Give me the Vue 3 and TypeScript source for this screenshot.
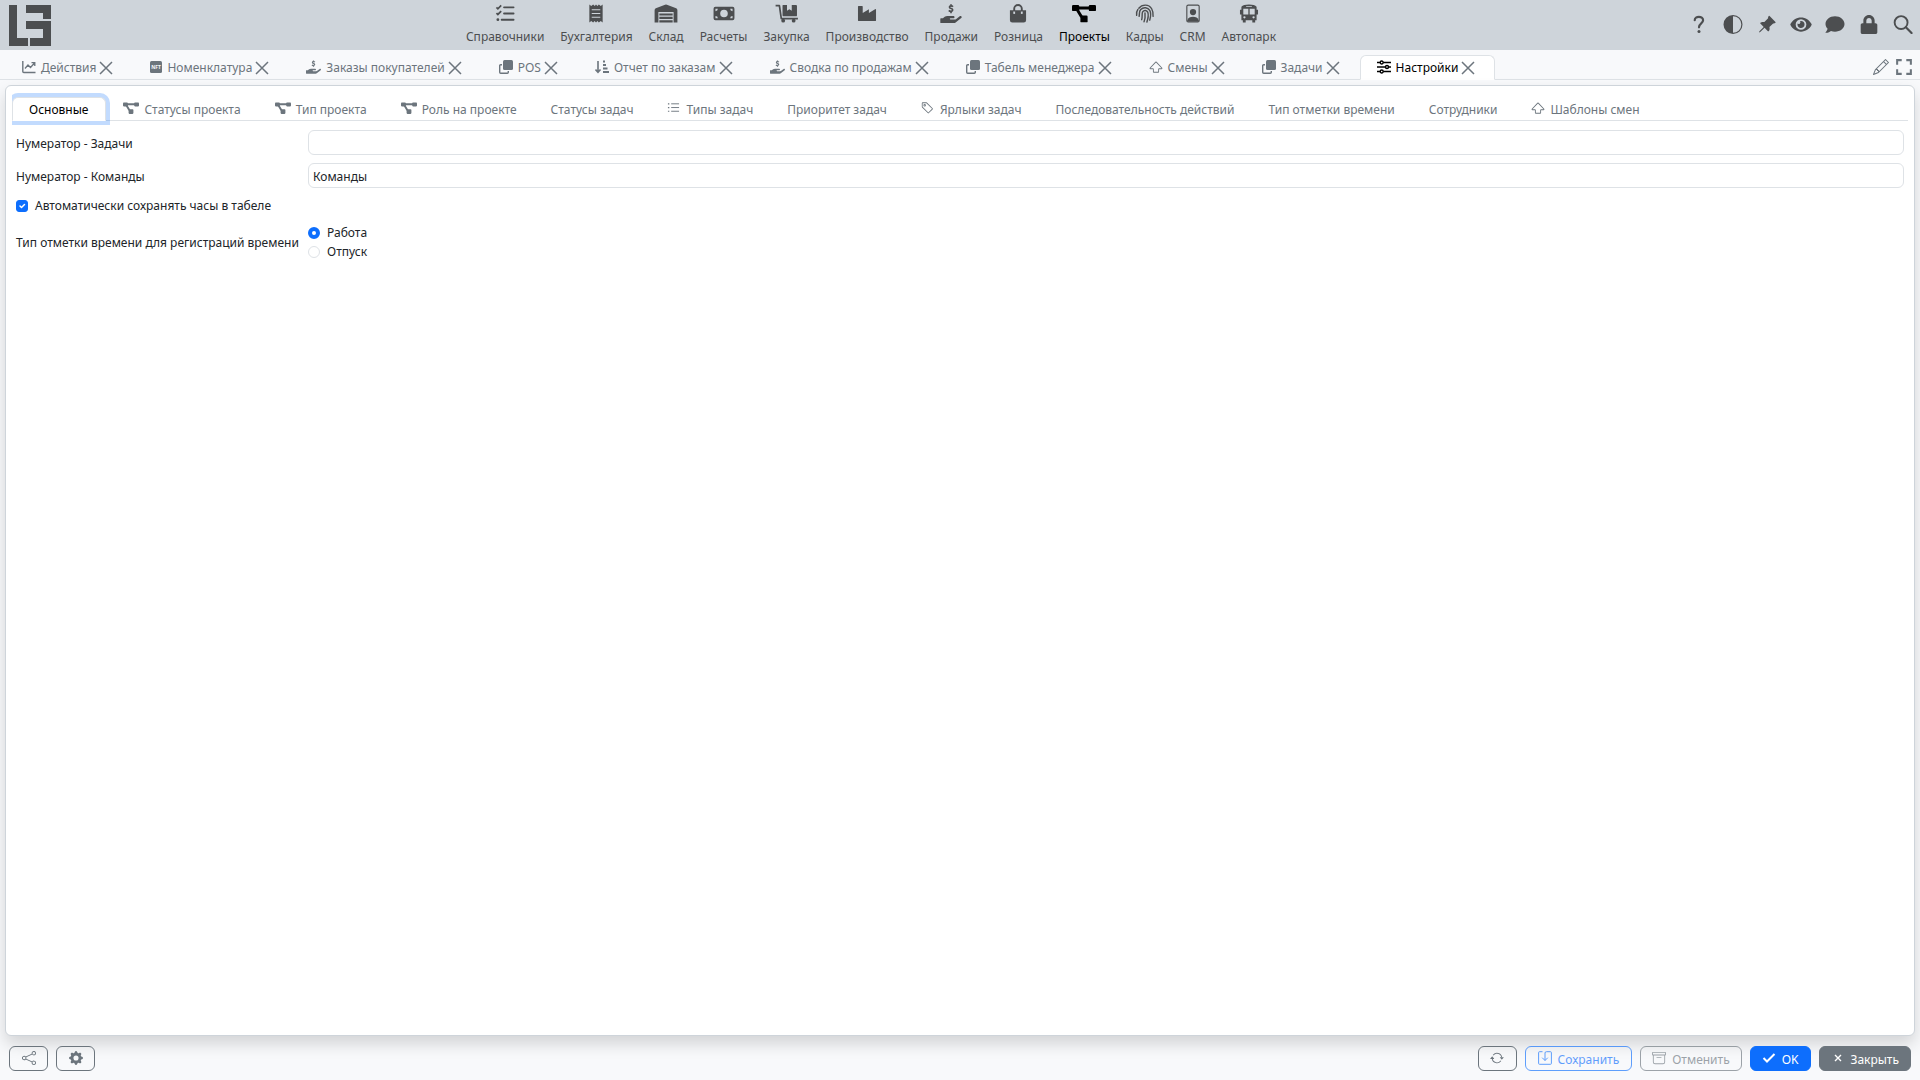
<script setup lang="ts">
import { ref } from 'vue'

interface Glyph { box: string; body: string }
interface Tab { title: string; icon?: string }

const stroke = (d: string, width = 1, extra = '') =>
  `<path d="${d}" fill="none" stroke="currentColor" stroke-width="${width}" ${extra}/>`
const fill = (d: string) => `<path d="${d}" fill="currentColor" fill-rule="evenodd"/>`

const glyphs: Record<string, Glyph> = {
  checklist: { box: '0 0 20 20', body: stroke('M9 3.5H19M9 10H19M6.500 16.500H19', 2, 'stroke-linecap="round"') + stroke('M1 3.500L2.500 5L6 1.500M1 9.500L2.500 11L6 7.500', 1.800) + '<circle cx="2.500" cy="16.500" r="1.500" fill="currentColor"/>' },
  receipt: { box: '0 0 20 20', body: fill('M3 .5L5 2L7 .5L8.700 2L10 .5L11.500 2L13 .5L15 2L17 .5V19.500L15 18L13 19.500L11.500 18L10 19.500L8.500 18L7 19.500L5 18L3 19.500ZM5.500 5.500V6.700H14.500V5.500ZM5.500 9.400V10.600H14.500V9.400ZM5.500 13.300V14.500H14.500V13.300Z') },
  warehouse: { box: '0 0 24 20', body: fill('M0 19.500V6.500Q0 5 1.300 4.500L11 .7Q12 .3 13 .7L22.700 4.500Q24 5 24 6.500V19.500H20V8.500H4V19.500ZM5 10H19V12H5ZM5 13.500H19V15.700H5ZM5 17.200H19V19.500H5Z') },
  money: { box: '0 0 24 20', body: fill('M3 3H21Q23 3 23 5V15Q23 17 21 17H3Q1 17 1 15V5Q1 3 3 3ZM3 5V7.500Q5.500 7.500 5.500 5ZM18.500 5Q18.500 7.500 21 7.500V5ZM3 12.500V15H5.500Q5.500 12.500 3 12.500ZM21 12.500Q18.500 12.500 18.500 15H21ZM12 6A4 4 0 1 0 12 14A4 4 0 1 0 12 6Z') },
  trolley: { box: '0 0 24 20', body: stroke('M0 1.700H4L6 15.500H23.500', 1.800, 'stroke-linejoin="round"') + fill('M8 1H12V7L14.500 5.500L17 7V1H21.500Q22.500 1 22.500 2V12Q22.500 13 21.500 13H8.500Q7.500 13 7.300 12V2Q7 1 8 1Z') + '<circle cx="8" cy="17.500" r="2" fill="currentColor"/><circle cx="19" cy="17.500" r="2" fill="currentColor"/>' },
  factory: { box: '0 0 20 20', body: fill('M1 2H5Q5.500 2 5.500 2.500V9.500L12 5.500V9.500L18.500 5.500Q19.500 5 19.500 6V17Q19.500 18 18.500 18H1.500Q.5 18 .5 17V2.500Q.5 2 1 2Z') },
  hand: { box: '0 0 576 512', body: fill('M565.3 328.1c-11.8-10.7-30.2-10-42.6 0L430.3 402c-11.3 9.1-25.4 14-40 14H272c-8.8 0-16-7.2-16-16s7.2-16 16-16h78.3c15.9 0 30.7-10.9 33.3-26.6 3.3-20-12.1-37.4-31.6-37.4H192c-27 0-53.1 9.300-74.1 26.300L71.4 384H16c-8.8 0-16 7.200-16 16v96c0 8.800 7.200 16 16 16h356.800c14.500 0 28.600-4.900 40-14L564 377c15.200-12.100 16.400-35.300 1.300-48.900z') + stroke('M340 72Q325 52 290 52C232 52 232 110 290 122C348 134 348 196 288 196Q248 196 230 172M288 6V52M288 196V246', 46) },
  bag: { box: '0 0 20 20', body: stroke('M6 8V5A4 4 0 0 1 14 5V8', 2) + fill('M1.500 6.500H18.500V17Q18.500 19.500 16 19.500H4Q1.500 19.500 1.500 17ZM5.200 9A1 1 0 1 0 6.800 9A1 1 0 1 0 5.200 9ZM13.200 9A1 1 0 1 0 14.800 9A1 1 0 1 0 13.200 9Z') },
  diagram: { box: '0 20 640 472', body: '<g fill="currentColor"><rect y="32" width="192" height="160" rx="32"/><rect x="448" y="32" width="192" height="160" rx="32"/><rect x="224" y="308" width="192" height="184" rx="32"/></g>' + stroke('M160 108H480M136 150L256 350', 78) },
  fingerprint: { box: '0 0 20 20', body: stroke('M3.500 4.500C7 0 14 0 17 5Q19 8.500 18.500 13M1.200 12C.8 9 1.500 7 2.500 5.800M3.800 13C4.500 9.500 3.500 8 5.500 5.800C8.500 2.800 13 3.500 15 6.800C16.500 9.500 16 13.500 15 17M6.500 16.500C7.500 13 6.500 10 7.500 8.300C9 6 12 6.500 13 8.800C14 12 13 16 12 19M9 18.700C10.300 15.500 10.300 12.500 10 9.500', 1.500, 'stroke-linecap="round"') },
  portrait: { box: '0 0 20 20', body: stroke('M5 1.200H15Q16.500 1.200 16.500 2.700V17.300Q16.500 18.800 15 18.800H5Q3.500 18.800 3.500 17.300V2.700Q3.500 1.200 5 1.200Z', 1.200) + '<circle cx="10" cy="8.500" r="3.300" fill="currentColor"/>' + fill('M4 17Q5.500 13.500 10 13.500Q14.500 13.500 16 17L15.500 18.500H4.500Z') },
  bus: { box: '0 0 20 20', body: fill('M2 3Q4 .5 10 .5Q16 .5 18 3V6H19.500V11H18V17H16.500V19.500H13.500V17H6.500V19.500H3.500V17H2V11H.5V6H2ZM4 5V11H9.300V5ZM10.700 5V11H16V5ZM4 14A1.200 1.200 0 1 0 6.400 14A1.200 1.200 0 1 0 4 14ZM13.600 14A1.200 1.200 0 1 0 16 14A1.200 1.200 0 1 0 13.600 14ZM7 2.300V3.200H13V2.300Z') },
  question: { box: '0 0 20 20', body: stroke('M5.500 5.500C5.500 .8 14.300 .8 14.300 5.500C14.300 9 10 8.500 10 13', 2.300, 'stroke-linecap="round"') + '<circle cx="10" cy="17.300" r="1.600" fill="currentColor"/>' },
  half: { box: '0 0 16 16', body: fill('M8 15A7 7 0 1 0 8 1v14zm0 1A8 8 0 1 1 8 0a8 8 0 0 1 0 16z') },
  pin: { box: '0 0 16 16', body: fill('M9.828.722a.5.5 0 0 1 .354.146l4.950 4.950a.5.5 0 0 1 0 .707c-.48.48-1.072.588-1.503.588-.177 0-.335-.018-.46-.039l-3.134 3.134a5.927 5.927 0 0 1 .16 1.013c.046.702-.032 1.687-.72 2.375a.5.5 0 0 1-.707 0l-2.829-2.828-3.182 3.182c-.195.195-1.219.902-1.414.707-.195-.195.512-1.220.707-1.414l3.182-3.182-2.828-2.829a.5.5 0 0 1 0-.707c.688-.688 1.673-.767 2.375-.72a5.922 5.922 0 0 1 1.013.16l3.134-3.133a2.772 2.772 0 0 1-.04-.461c0-.43.108-1.022.589-1.503a.5.5 0 0 1 .353-.146z') },
  eye: { box: '0 0 576 512', body: fill('M572.520 241.400C518.290 135.590 410.930 64 288 64S57.680 135.640 3.480 241.410a32.350 32.350 0 0 0 0 29.190C57.710 376.410 165.070 448 288 448s230.320-71.640 284.520-177.410a32.350 32.350 0 0 0 0-29.190zM288 400a144 144 0 1 1 144-144 143.930 143.930 0 0 1-144 144zm0-240a95.310 95.310 0 0 0-25.310 3.790 47.850 47.850 0 0 1-66.900 66.900A95.780 95.780 0 1 0 288 160z') },
  comment: { box: '0 0 512 512', body: fill('M256 32C114.600 32 0 125.100 0 240c0 49.600 21.400 95 57 130.700C44.500 421.100 2.700 466 2.200 466.500c-2.200 2.300-2.800 5.700-1.500 8.700S4.800 480 8 480c66.300 0 116-31.800 140.600-51.400 32.700 12.300 69 19.400 107.400 19.400 141.400 0 256-93.100 256-208S397.400 32 256 32z') },
  lock: { box: '0 0 448 512', body: fill('M400 224h-24v-72C376 68.200 307.800 0 224 0S72 68.200 72 152v72H48c-26.500 0-48 21.500-48 48v192c0 26.500 21.500 48 48 48h352c26.500 0 48-21.500 48-48V272c0-26.500-21.500-48-48-48zm-104 0H152v-72c0-39.700 32.300-72 72-72s72 32.300 72 72v72z') },
  search: { box: '0 0 20 20', body: '<circle cx="8" cy="8" r="6.800" fill="none" stroke="currentColor" stroke-width="2"/>' + stroke('M13 13L19 19', 2.300, 'stroke-linecap="round"') },
  chart: { box: '0 0 14 14', body: stroke('M.8 1V11.500Q.8 12.500 1.800 12.500H13.500', 1.400) + stroke('M3 8.500L6 5L8.500 7.500L12.500 3M9.500 2.600H12.800V6', 1.300) },
  nft: { box: '0 0 12 12', body: '<rect width="12" height="12" rx="1.500" fill="currentColor"/><text x="6" y="8" text-anchor="middle" font-size="5" font-weight="700" fill="#f8f9fb">NFT</text>' },
  copies: { box: '0 0 14 14', body: '<rect x="4" y="0" width="10" height="10" rx="1.500" fill="currentColor"/>' + stroke('M3 4.700H1.700Q.7 4.700 .7 5.700V12.300Q.7 13.300 1.700 13.300H8.300Q9.300 13.300 9.300 12.300V11', 1.400) },
  sort: { box: '0 0 14 14', body: stroke('M3 1V12M.5 9.500L3 12.200L5.500 9.500', 1.600) + stroke('M8 1.500H10M8 5H11M8 8.500H12.500M8 12H14', 1.800) },
  shift: { box: '0 0 16 16', body: fill('M7.270 2.047a1 1 0 0 1 1.460 0l6.345 6.770c.6.638.146 1.683-.73 1.683H11.500v3a1 1 0 0 1-1 1h-5a1 1 0 0 1-1-1v-3H1.654C.78 10.500.326 9.455.924 8.816L7.270 2.047zM14.346 9.500 8 2.731 1.654 9.500H4.500a1 1 0 0 1 1 1v3h5v-3a1 1 0 0 1 1-1h2.846z') },
  sliders: { box: '0 0 14 14', body: stroke('M0 2.500H3.200M6.200 2.500H14M0 7H8.500M11.500 7H14M0 11.500H3.200M6.200 11.500H14', 1.700) + stroke('M3.200 2.500a1.500 1.500 0 1 0 3 0a1.500 1.500 0 1 0-3 0M8.500 7a1.500 1.500 0 1 0 3 0a1.500 1.500 0 1 0-3 0M3.200 11.500a1.500 1.500 0 1 0 3 0a1.500 1.500 0 1 0-3 0', 1.400) },
  list: { box: '0 0 14 14', body: stroke('M4.500 2.500H13M4.500 6.500H13M4.500 10.500H13', 1) + stroke('M1 2.500H2.500M1 6.500H2.500M1 10.500H2.500', 1.300) },
  tag: { box: '0 0 16 16', body: fill('M6 4.500a1.500 1.500 0 1 1-3 0 1.500 1.500 0 0 1 3 0zm-1 0a.5.5 0 1 0-1 0 .5.5 0 0 0 1 0z') + fill('M2 1h4.586a1 1 0 0 1 .707.293l7 7a1 1 0 0 1 0 1.414l-4.586 4.586a1 1 0 0 1-1.414 0l-7-7A1 1 0 0 1 1 6.586V2a1 1 0 0 1 1-1zm0 5.586 7 7L13.586 9l-7-7H2v4.586z') },
  close: { box: '0 0 14 14', body: stroke('M1 1L13 13M13 1L1 13', 1.500) },
  pencil: { box: '0 0 16 16', body: fill('M12.146.146a.5.5 0 0 1 .708 0l3 3a.5.5 0 0 1 0 .708l-10 10a.5.5 0 0 1-.168.11l-5 2a.5.5 0 0 1-.65-.65l2-5a.5.5 0 0 1 .11-.168l10-10zM11.207 2.500 13.500 4.793 14.793 3.500 12.500 1.207 11.207 2.500zm1.586 3L10.500 3.207 4 9.707V10h.5a.5.5 0 0 1 .5.5v.5h.5a.5.5 0 0 1 .5.5v.5h.293l6.500-6.500zm-9.761 5.175-.106.106-1.528 3.821 3.821-1.528.106-.106A.5.5 0 0 1 5 12.500V12h-.5a.5.5 0 0 1-.5-.5V11h-.5a.5.5 0 0 1-.468-.325z') },
  expand: { box: '0 0 14 14', body: stroke('M1 5V1H5M9 1H13V5M13 9V13H9M5 13H1V9', 1.800) },
  share: { box: '0 0 16 16', body: fill('M13.500 1a1.500 1.500 0 1 0 0 3 1.500 1.500 0 0 0 0-3zM11 2.500a2.500 2.500 0 1 1 .603 1.628l-6.718 3.120a2.499 2.499 0 0 1 0 1.504l6.718 3.120a2.500 2.500 0 1 1-.488.876l-6.718-3.120a2.500 2.500 0 1 1 0-3.256l6.718-3.120A2.500 2.500 0 0 1 11 2.500zm-8.500 4a1.500 1.500 0 1 0 0 3 1.500 1.500 0 0 0 0-3zm11 5.500a1.500 1.500 0 1 0 0 3 1.500 1.500 0 0 0 0-3z') },
  gear: { box: '0 0 16 16', body: fill('M9.405 1.050c-.413-1.400-2.397-1.400-2.810 0l-.1.34a1.464 1.464 0 0 1-2.105.872l-.31-.17c-1.283-.698-2.686.705-1.987 1.987l.169.311c.446.82.023 1.841-.872 2.105l-.34.1c-1.400.413-1.400 2.397 0 2.810l.34.1a1.464 1.464 0 0 1 .872 2.105l-.17.31c-.698 1.283.705 2.686 1.987 1.987l.311-.169a1.464 1.464 0 0 1 2.105.872l.1.34c.413 1.400 2.397 1.400 2.810 0l.1-.34a1.464 1.464 0 0 1 2.105-.872l.31.17c1.283.698 2.686-.705 1.987-1.987l-.169-.311a1.464 1.464 0 0 1 .872-2.105l.34-.1c1.400-.413 1.400-2.397 0-2.810l-.34-.1a1.464 1.464 0 0 1-.872-2.105l.17-.31c.698-1.283-.705-2.686-1.987-1.987l-.311.169a1.464 1.464 0 0 1-2.105-.872l-.1-.34zM8 10.930a2.929 2.929 0 1 1 0-5.860 2.929 2.929 0 0 1 0 5.858z') },
  refresh: { box: '0 0 16 16', body: fill('M11.534 7h3.932a.25.25 0 0 1 .192.41l-1.966 2.360a.25.25 0 0 1-.384 0l-1.966-2.360a.25.25 0 0 1 .192-.41zm-11 2h3.932a.25.25 0 0 0 .192-.41L2.692 6.230a.25.25 0 0 0-.384 0L.342 8.590A.25.25 0 0 0 .534 9z') + fill('M8 3c-1.552 0-2.940.707-3.857 1.818a.5.5 0 1 1-.771-.636A6.002 6.002 0 0 1 13.917 7H12.900A5.002 5.002 0 0 0 8 3zM3.100 9a5.002 5.002 0 0 0 8.757 2.182.5.5 0 1 1 .771.636A6.002 6.002 0 0 1 2.083 9H3.100z') },
  save: { box: '0 0 14 14', body: stroke('M4.500 .7H1.500Q.6 .7 .6 1.600V12.400Q.6 13.300 1.500 13.300H12.500Q13.400 13.300 13.400 12.400V1.600Q13.400 .7 12.500 .7H8.500Q7 .7 7 2V9.500M4.200 6.700L7 9.500L9.800 6.700', 1) },
  archive: { box: '0 0 16 16', body: fill('M0 2a1 1 0 0 1 1-1h14a1 1 0 0 1 1 1v2a1 1 0 0 1-1 1v7.500a2.500 2.500 0 0 1-2.500 2.500h-9A2.500 2.500 0 0 1 1 12.500V5a1 1 0 0 1-1-1V2zm2 3v7.500A1.500 1.500 0 0 0 3.500 14h9a1.500 1.500 0 0 0 1.500-1.500V5H2zm13-3H1v2h14V2zM5 7.500a.5.5 0 0 1 .5-.5h5a.5.5 0 0 1 0 1h-5a.5.5 0 0 1-.5-.5z') },
  check: { box: '0 0 14 14', body: stroke('M1.500 7L5 10.500L12.500 3', 2) },
  cross: { box: '0 0 14 14', body: stroke('M4 4L10 10M10 4L4 10', 1.400) },
}

const modules: Tab[] = [
  { title: 'Справочники', icon: 'checklist' },
  { title: 'Бухгалтерия', icon: 'receipt' },
  { title: 'Склад', icon: 'warehouse' },
  { title: 'Расчеты', icon: 'money' },
  { title: 'Закупка', icon: 'trolley' },
  { title: 'Производство', icon: 'factory' },
  { title: 'Продажи', icon: 'hand' },
  { title: 'Розница', icon: 'bag' },
  { title: 'Проекты', icon: 'diagram' },
  { title: 'Кадры', icon: 'fingerprint' },
  { title: 'CRM', icon: 'portrait' },
  { title: 'Автопарк', icon: 'bus' },
]
const tools: Tab[] = [
  { title: 'Справка', icon: 'question' },
  { title: 'Тема', icon: 'half' },
  { title: 'Закрепить', icon: 'pin' },
  { title: 'Просмотр', icon: 'eye' },
  { title: 'Сообщения', icon: 'comment' },
  { title: 'Пароль', icon: 'lock' },
  { title: 'Поиск', icon: 'search' },
]
const windows: Tab[] = [
  { title: 'Действия', icon: 'chart' },
  { title: 'Номенклатура', icon: 'nft' },
  { title: 'Заказы покупателей', icon: 'hand' },
  { title: 'POS', icon: 'copies' },
  { title: 'Отчет по заказам', icon: 'sort' },
  { title: 'Сводка по продажам', icon: 'hand' },
  { title: 'Табель менеджера', icon: 'copies' },
  { title: 'Смены', icon: 'shift' },
  { title: 'Задачи', icon: 'copies' },
  { title: 'Настройки', icon: 'sliders' },
]
const sections: Tab[] = [
  { title: 'Основные' },
  { title: 'Статусы проекта', icon: 'diagram' },
  { title: 'Тип проекта', icon: 'diagram' },
  { title: 'Роль на проекте', icon: 'diagram' },
  { title: 'Статусы задач' },
  { title: 'Типы задач', icon: 'list' },
  { title: 'Приоритет задач' },
  { title: 'Ярлыки задач', icon: 'tag' },
  { title: 'Последовательность действий' },
  { title: 'Тип отметки времени' },
  { title: 'Сотрудники' },
  { title: 'Шаблоны смен', icon: 'shift' },
]

const activeModule = ref('Проекты')
const activeWindow = ref('Настройки')
const activeSection = ref('Основные')
const taskNumerator = ref('')
const teamNumerator = ref('Команды')
const autoSave = ref(true)
const markType = ref('Работа')
</script>

<template>
  <div class="app">
    <header class="header">
      <a class="logo" href="#" aria-label="На главную">
        <svg viewBox="0 0 42 41" fill="#4c4e50" aria-hidden="true">
          <path d="M0 0H8V33H19V41H0ZM17 0H42V14H34V8H17ZM17 16H42V41H21V33H34V24H17Z" />
        </svg>
      </a>
      <nav class="modules">
        <a v-for="m in modules" :key="m.title" href="#" class="module" :class="{ active: m.title === activeModule }" @click.prevent="activeModule = m.title">
          <svg class="module-icon" :viewBox="glyphs[m.icon!].box" aria-hidden="true" v-html="glyphs[m.icon!].body" />
          <span>{{ m.title }}</span>
        </a>
      </nav>
      <div class="tools">
        <button v-for="t in tools" :key="t.title" type="button" class="tool" :aria-label="t.title">
          <svg :viewBox="glyphs[t.icon!].box" aria-hidden="true" v-html="glyphs[t.icon!].body" />
        </button>
      </div>
    </header>

    <div class="windows">
      <div v-for="w in windows" :key="w.title" class="window" :class="{ active: w.title === activeWindow }">
        <button type="button" class="window-name" @click="activeWindow = w.title">
          <svg class="tab-icon" :class="w.icon" :viewBox="glyphs[w.icon!].box" aria-hidden="true" v-html="glyphs[w.icon!].body" />
          <span>{{ w.title }}</span>
        </button>
        <button type="button" class="window-close" aria-label="Закрыть вкладку">
          <svg :viewBox="glyphs.close.box" aria-hidden="true" v-html="glyphs.close.body" />
        </button>
      </div>
      <div class="window-tools">
        <button type="button" aria-label="Изменить"><svg :viewBox="glyphs.pencil.box" aria-hidden="true" v-html="glyphs.pencil.body" /></button>
        <button type="button" aria-label="Развернуть"><svg :viewBox="glyphs.expand.box" aria-hidden="true" v-html="glyphs.expand.body" /></button>
      </div>
    </div>

    <main class="card">
      <div class="sections">
        <button v-for="s in sections" :key="s.title" type="button" class="section" :class="{ active: s.title === activeSection }" @click="activeSection = s.title">
          <svg v-if="s.icon" class="tab-icon" :class="s.icon" :viewBox="glyphs[s.icon].box" aria-hidden="true" v-html="glyphs[s.icon].body" />
          <span>{{ s.title }}</span>
        </button>
      </div>

      <form class="form" @submit.prevent>
        <label class="caption" for="task-numerator">Нумератор - Задачи</label>
        <input id="task-numerator" v-model="taskNumerator" class="field" type="text" />
        <label class="caption" for="team-numerator">Нумератор - Команды</label>
        <input id="team-numerator" v-model="teamNumerator" class="field" type="text" />
        <label class="option wide"><input v-model="autoSave" class="check" type="checkbox" />Автоматически сохранять часы в табеле</label>
        <span id="mark-label" class="caption">Тип отметки времени для регистраций времени</span>
        <div class="radios" role="radiogroup" aria-labelledby="mark-label">
          <label v-for="o in ['Работа', 'Отпуск']" :key="o" class="option"><input v-model="markType" class="radio" type="radio" name="mark" :value="o" />{{ o }}</label>
        </div>
      </form>
    </main>

    <footer class="footer">
      <button type="button" class="btn square" aria-label="Поделиться"><svg :viewBox="glyphs.share.box" v-html="glyphs.share.body" /></button>
      <button type="button" class="btn square" aria-label="Настройка формы"><svg :viewBox="glyphs.gear.box" v-html="glyphs.gear.body" /></button>
      <span class="spacer" />
      <button type="button" class="btn square" aria-label="Обновить"><svg :viewBox="glyphs.refresh.box" v-html="glyphs.refresh.body" /></button>
      <button type="button" class="btn save" disabled><svg :viewBox="glyphs.save.box" v-html="glyphs.save.body" /><span>Сохранить</span></button>
      <button type="button" class="btn cancel" disabled><svg :viewBox="glyphs.archive.box" v-html="glyphs.archive.body" /><span>Отменить</span></button>
      <button type="button" class="btn ok"><svg :viewBox="glyphs.check.box" v-html="glyphs.check.body" /><span>OK</span></button>
      <button type="button" class="btn dismiss"><svg :viewBox="glyphs.cross.box" v-html="glyphs.cross.body" /><span>Закрыть</span></button>
    </footer>
  </div>
</template>

<style>
body {
  margin: 0;
  background: #f8f9fb;
}
</style>

<style scoped>
.app {
  display: flex;
  flex-direction: column;
  min-height: 100vh;
  font-family: "Noto Sans", "Open Sans", sans-serif;
  font-size: 12px;
  line-height: 18px;
  color: #212529;
}
.app *,
.app {
  box-sizing: border-box;
}
button,
input {
  font: inherit;
  color: inherit;
  margin: 0;
}
button {
  display: flex;
  align-items: center;
  justify-content: center;
  border: 0;
  padding: 0;
  background: none;
  white-space: nowrap;
}
svg {
  display: block;
  flex: none;
}
.header {
  display: flex;
  align-items: center;
  height: 50px;
  background: #ced4da;
  color: #4c4e50;
}
.logo {
  width: 60px;
  padding-left: 9px;
}
.logo svg {
  width: 42px;
  height: 41px;
}
.modules {
  flex: 1;
  display: flex;
  justify-content: center;
  gap: 16px;
}
.module {
  display: flex;
  flex-direction: column;
  align-items: center;
  gap: 5px;
  color: inherit;
  text-decoration: none;
}
.module.active {
  color: #000;
}
.module-icon {
  width: 24px;
  height: 19px;
}
.tools {
  display: flex;
}
.tool {
  width: 34px;
  height: 40px;
  padding-bottom: 1px;
}
.tool svg {
  width: 22px;
  height: 19px;
}
.windows {
  display: flex;
  height: 30px;
  padding: 5px 5px 0;
  border-bottom: 1px solid #dee2e6;
  color: #6c757d;
}
.window {
  display: flex;
  height: 25px;
  padding: 0 16px;
  border: 1px solid transparent;
  border-radius: 6px 6px 0 0;
}
.window.active {
  border-color: #dee2e6;
  border-bottom-color: #fff;
  background: #fff;
  color: #000;
}
.tab-icon {
  width: 14px;
  height: 14px;
  margin: 0 5px 2px 0;
}
.tab-icon.nft {
  width: 12px;
}
.tab-icon.hand {
  width: 15px;
}
.tab-icon.diagram {
  width: 16px;
}
.tab-icon.list,
.tab-icon.tag {
  width: 13px;
  margin-right: 6px;
}
.window-close {
  width: 20px;
  color: #6c757d;
}
.window-close svg {
  width: 14px;
  height: 14px;
}
.window-tools {
  display: flex;
  gap: 7px;
  margin-left: auto;
  padding-right: 3px;
}
.window-tools svg {
  width: 16px;
  height: 16px;
}
.card {
  flex: 1;
  margin: 5px 5px 0;
  padding: 11px 6px;
  border: 1px solid #ced4da;
  border-radius: 6px;
  background: #fff;
  box-shadow: 0 8px 16px rgba(0, 0, 0, 0.15);
}
.sections {
  display: flex;
  border-bottom: 1px solid #dee2e6;
  color: #6c757d;
  clip-path: inset(-4px 0 -4px 0);
}
.section {
  height: 24px;
  padding: 0 16px;
  border: 1px solid transparent;
  border-radius: 6px 6px 0 0;
  margin-bottom: -1px;
}
.section span,
.btn span,
.caption {
  padding-top: 2px;
}
.section.active {
  padding-right: 17px;
  border-color: #dee2e6 #dee2e6 #fff;
  color: #000;
  background: #fff;
  box-shadow: 0 0 0 4px rgba(13, 110, 253, 0.25);
}
.form {
  display: grid;
  grid-template-columns: minmax(284px, max-content) 1fr;
  column-gap: 8px;
  row-gap: 8px;
  align-items: center;
  padding: 9px 4px;
}
.field {
  width: 100%;
  height: 25px;
  padding: 1px 4px 0;
  border: 1px solid #dee2e6;
  border-radius: 6px;
  background: #fff;
}
.option {
  display: flex;
  align-items: center;
  gap: 7px;
  line-height: 19px;
}
.option.wide {
  grid-column: 1 / -1;
}
.check,
.radio {
  appearance: none;
  width: 12px;
  height: 12px;
  border: 1px solid #dee2e6;
  background: #fff;
}
.check {
  border-radius: 3px;
}
.check:checked {
  border-color: #0d6efd;
  background: #0d6efd url("data:image/svg+xml,%3Csvg xmlns='http://www.w3.org/2000/svg' viewBox='0 0 20 20'%3E%3Cpath fill='none' stroke='%23fff' stroke-linecap='round' stroke-linejoin='round' stroke-width='3' d='m6 10 3 3 6-6'/%3E%3C/svg%3E") center / contain;
}
.radio {
  border-radius: 50%;
}
.radio:checked {
  border: 4px solid #0d6efd;
}
.footer {
  display: flex;
  gap: 8px;
  padding: 10px 9px 9px;
}
.spacer {
  flex: 1;
}
.btn {
  height: 25px;
  gap: 6px;
  padding: 0 11px;
  border: 1px solid #6c757d;
  border-radius: 6px;
  color: #6c757d;
}
.btn svg {
  width: 14px;
  height: 14px;
  margin-bottom: 2px;
}
.btn.square {
  width: 39px;
}
.btn.save {
  padding: 0 12px;
  border-color: #0d6efd;
  color: #0d6efd;
  opacity: 0.65;
}
.btn.cancel {
  opacity: 0.65;
}
.btn.ok {
  border-color: #0d6efd;
  background: #0d6efd;
  color: #fff;
}
.btn.dismiss {
  background: #6c757d;
  color: #fff;
}
</style>
